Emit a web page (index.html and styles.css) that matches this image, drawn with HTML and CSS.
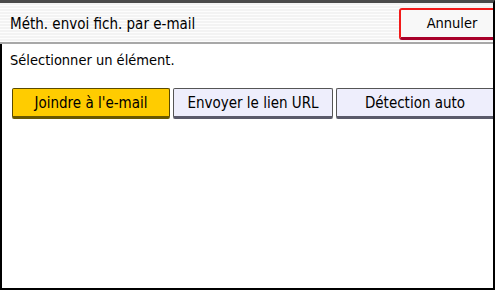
FILE: index.html
```html
<!DOCTYPE html>
<html>
<head>
<meta charset="utf-8">
<link rel="stylesheet" href="styles.css">
</head>
<body>
<div class="screen">
  <div class="header">
    <div class="title">Méth. envoi fich. par e-mail</div>
    <button class="cancel">Annuler</button>
  </div>
  <div class="content">
    <div class="prompt">Sélectionner un élément.</div>
    <div class="choices">
      <button class="choice selected">Joindre à l'e-mail</button>
      <button class="choice">Envoyer le lien URL</button>
      <button class="choice last">Détection auto</button>
    </div>
  </div>
</div>
</body>
</html>
```
FILE: styles.css
```css
html, body {
  margin: 0;
  padding: 0;
  background: #fff;
}
.screen {
  width: 495px;
  height: 290px;
  box-sizing: border-box;
  border-top: 3px solid #4a4a4a;
  border-right: 2px solid #000;
  display: flex;
  flex-direction: column;
  font-family: "DejaVu Sans Condensed", "DejaVu Sans", sans-serif;
  color: #000;
}
.header {
  height: 39px;
  flex: none;
  display: flex;
  align-items: center;
  justify-content: space-between;
  overflow: hidden;
  background: repeating-linear-gradient(to bottom, #f3f3f3 0, #f3f3f3 2px, #fdfdfd 2px, #fdfdfd 3px);
  border-bottom: 2px solid #a8a8a8;
  padding-left: 10px;
}
.title {
  font-size: 15px;
  padding-top: 2px;
}
.cancel {
  flex: none;
  width: 106px;
  height: 32px;
  margin-top: 2px;
  margin-right: -12px;
  box-sizing: border-box;
  border: 2px solid #f21a1a;
  border-bottom: 3px solid #a8002a;
  border-radius: 3px;
  background: #f8f8f8;
  font-family: inherit;
  font-size: 14.5px;
  color: #000;
  padding: 0;
}
.content {
  flex: 1;
  border-left: 2px solid #000;
  border-bottom: 2px solid #000;
  padding: 8px 0 0 8px;
}
.prompt {
  font-size: 14.5px;
  height: 20px;
}
.choices {
  display: flex;
  gap: 3px;
  margin-top: 16px;
  margin-left: 2px;
}
.choice {
  height: 31px;
  width: 158px;
  box-sizing: border-box;
  border: 1px solid #555;
  border-bottom: 3px solid #5a5a6a;
  border-radius: 2px;
  background: #eeeefc;
  font-family: inherit;
  font-size: 15px;
  color: #000;
  padding: 0;
}
.choice + .choice {
  width: 160px;
}
.choice.last {
  flex: 1;
  border-right: none;
  border-radius: 2px 0 0 2px;
}
.choice.selected {
  background: #ffcc00;
  border-color: #5a4a00;
  border-bottom-color: #6a5800;
}
```
